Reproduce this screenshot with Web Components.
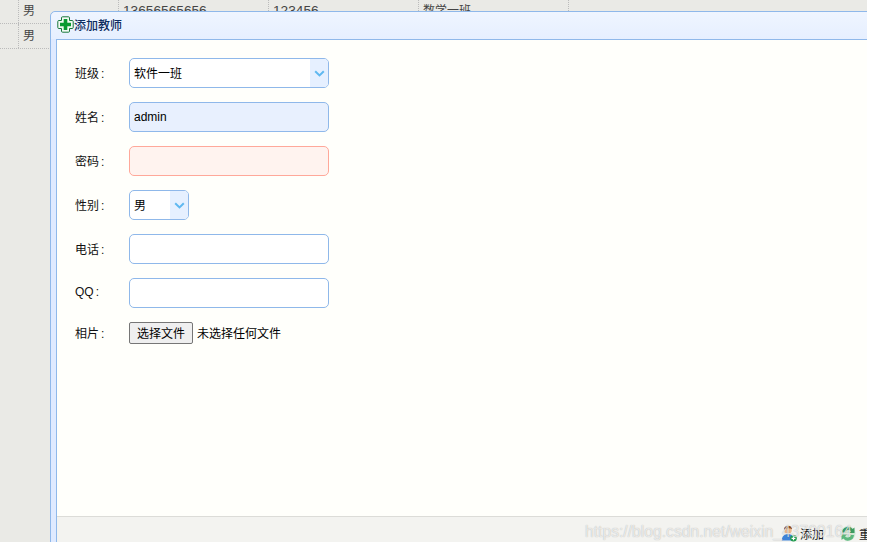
<!DOCTYPE html>
<html><head><meta charset="utf-8">
<style>
html,body{margin:0;padding:0;background:#fff;height:100%;overflow:hidden}
body{font:12px "Liberation Sans","Noto Sans CJK SC",sans-serif}
</style></head><body>
<edu-desktop>
  <edu-grid slot="grid"></edu-grid>
  <edu-dialog slot="dialog" heading="添加教师">
    <edu-field label="班级"><edu-select value="软件一班" width="200"></edu-select></edu-field>
    <edu-field label="姓名"><edu-input value="admin" state="filled"></edu-input></edu-field>
    <edu-field label="密码"><edu-input state="invalid"></edu-input></edu-field>
    <edu-field label="性别"><edu-select value="男" width="60"></edu-select></edu-field>
    <edu-field label="电话"><edu-input></edu-input></edu-field>
    <edu-field label="QQ"><edu-input></edu-input></edu-field>
    <edu-field label="相片" kind="file"><edu-file></edu-file></edu-field>
    <edu-action slot="foot" icon="add">添加</edu-action>
    <edu-action slot="foot" icon="reset">重置</edu-action>
  </edu-dialog>
  <edu-watermark slot="mark"></edu-watermark>
</edu-desktop>
<script>
const FONT='"Liberation Sans","Noto Sans CJK SC",sans-serif';
const BLUE='#8fb8ea';
class Base extends HTMLElement{
  render(html){ if(!this.shadowRoot) this.attachShadow({mode:'open'}); this.shadowRoot.innerHTML=html; }
}
customElements.define('edu-desktop',class extends Base{connectedCallback(){this.render(`<style>
:host{display:block;position:relative;width:867px;height:542px;overflow:hidden;background:#eaeae6}
</style><slot name="grid"></slot><slot name="dialog"></slot><slot name="mark"></slot>`)}});

customElements.define('edu-grid',class extends Base{connectedCallback(){
  const rows=[['男','13656565656','123456','数学一班'],['男','','','']];
  this.render(`<style>
  :host{display:block;color:#444;font:12px ${FONT};margin-top:-1px}
  .row{display:grid;grid-template-columns:18px 100px 150px 150px 150px 1fr;height:24px;border-bottom:1px dotted #bbb}
  .c{border-left:1px dotted #bbb;padding:0 4px;line-height:24px;white-space:nowrap;overflow:hidden}
  .c:first-child{border:0;padding:0}
  .n{font-size:13.7px}
  </style>`+rows.map(r=>`<div class="row"><div class="c"></div><div class="c">${r[0]}</div><div class="c n">${r[1]}</div><div class="c n">${r[2]}</div><div class="c">${r[3]}</div><div class="c"></div></div>`).join(''));
}});

customElements.define('edu-dialog',class extends Base{connectedCallback(){
  this.render(`<style>
  :host{position:absolute;left:50px;top:11px;width:860px;height:560px;box-sizing:border-box;display:flex;flex-direction:column;
    background:#dfeaff;border:1px solid ${BLUE};border-radius:5px 0 0 0;font:12px ${FONT};color:#000}
  .head{height:27px;flex:none;display:flex;align-items:center;padding:0 0 2px 6px;background:linear-gradient(#eff5ff,#e6efff);color:#0e2d5f;box-sizing:border-box;border-radius:5px 0 0 0}
  .head svg{flex:none}
  .head span{font-weight:500}
  .body{flex:1;margin-left:5px;border:1px solid ${BLUE};border-bottom:0;border-right:0;background:#fffffb;display:flex;flex-direction:column;min-height:0}
  .form{height:476px;flex:none;box-sizing:border-box;padding:18px 0 0 18px;display:flex;flex-direction:column;gap:14px}
  .foot{flex:1;background:#f3f3f0;border-top:1px solid #dcdcd8;display:flex;padding:8px 0 0 724px;gap:16px;align-items:flex-start}
  </style>
  <div class="head"><svg width="17" height="17" viewBox="0 0 17 17">
   <path d="M5.5 .8h6a1 1 0 0 1 1 1v2.700h2.700a1 1 0 0 1 1 1v6a1 1 0 0 1-1 1h-2.700v2.700a1 1 0 0 1-1 1h-6a1 1 0 0 1-1-1v-2.700H1.800a1 1 0 0 1-1-1v-6a1 1 0 0 1 1-1h2.700V1.800a1 1 0 0 1 1-1z" fill="#f2faf3" stroke="#17773a" stroke-width="1"/>
   <path d="M6.700 3h3.600v3.700H14v3.600h-3.700V14H6.700v-3.700H3V6.700h3.700z" fill="#0a9a32"/></svg><span>${this.getAttribute('heading')}</span></div>
  <div class="body"><div class="form"><slot></slot></div><div class="foot"><slot name="foot"></slot></div></div>`);
}});

customElements.define('edu-field',class extends Base{connectedCallback(){
  const file=this.getAttribute('kind')==='file';
  this.render(`<style>
  :host{display:flex;align-items:center;height:${file?'22px':'30px'};font:12px ${FONT};color:#000}
  .l{width:54px;flex:none;color:#111;padding-bottom:2px;box-sizing:border-box;white-space:nowrap}
  .c{padding-left:2px}
  </style><div class="l">${this.getAttribute('label')}<span class="c">:</span></div><slot></slot>`);
}});

customElements.define('edu-input',class extends Base{connectedCallback(){
  const s=this.getAttribute('state')||'';
  const bg=s==='filled'?'#e8f0fe':s==='invalid'?'#fff3ef':'#fff';
  const bc=s==='invalid'?'#ffa89a':BLUE;
  this.render(`<style>
  :host{display:block;width:200px;height:30px}
  input{display:block;width:100%;height:100%;box-sizing:border-box;border:1px solid ${bc};border-radius:5px;background:${bg};padding:0 4px;margin:0;font:12px ${FONT};color:#000;outline:0}
  </style><input value="${this.getAttribute('value')||''}">`);
}});

customElements.define('edu-select',class extends Base{connectedCallback(){
  const w=this.getAttribute('width');
  this.render(`<style>
  :host{display:flex;width:${w}px;height:30px;box-sizing:border-box;border:1px solid ${BLUE};border-radius:5px;background:#fff;overflow:hidden;font:12px ${FONT};color:#000}
  .t{flex:1;padding-left:4px;line-height:30px;white-space:nowrap}
  .a{width:18px;flex:none;background:#e6f0ff;display:flex;align-items:center;justify-content:center}
  </style><div class="t">${this.getAttribute('value')}</div><div class="a"><svg width="11" height="7" viewBox="0 0 11 7"><path d="M1.200 1.200 5.500 5.400 9.800 1.200" fill="none" stroke="#5fb8f0" stroke-width="2"/></svg></div>`);
}});

customElements.define('edu-file',class extends Base{connectedCallback(){
  this.render(`<style>
  :host{display:flex;align-items:center;font:12px ${FONT};color:#000}
  .b{width:64px;height:22px;box-sizing:border-box;border:1px solid #767676;border-radius:2px;background:#efefef;text-align:center;line-height:22px;color:#000}
  .t{margin-left:4px;padding-bottom:2px}
  </style><div class="b">选择文件</div><div class="t">未选择任何文件</div>`);
}});

customElements.define('edu-action',class extends Base{connectedCallback(){
  const add=`<svg width="16" height="17" viewBox="0 0 16 17"><circle cx="7" cy="5" r="3.800" fill="#eeb98f"/><path d="M3 4.800C3 1.800 5 .8 7 .8s4 1 4 3.400C9 3 6 3 3 4.800z" fill="#8a4a22"/><path d="M.8 15.500c0-4.300 2.600-6.500 6.200-6.500s6 2.200 6 6.500z" fill="#3f84d8"/><circle cx="12.500" cy="13.300" r="3.300" fill="#1f9a4c"/><path d="M12.500 11.400v3.800M10.600 13.300h3.800" stroke="#fff" stroke-width="1.200"/></svg>`;
  const rst=`<svg width="16" height="17" viewBox="0 0 16 17"><circle cx="8" cy="8.500" r="7.500" fill="#cfe8d6"/><path d="M2 7.500A6 6 0 0 1 12.600 4L14.500 2.500V8H9l2-1.800A3.500 3.500 0 0 0 5 7.500z" fill="#3d9c62"/><path d="M14 10A6 6 0 0 1 3.400 13.500L1.500 15V9.500H7L5 11.300a3.500 3.500 0 0 0 6-1.300z" fill="#5cb87e"/></svg>`;
  this.render(`<style>
  :host{display:flex;align-items:center;gap:3px;font:12px ${FONT};color:#1a1a1a;height:17px;white-space:nowrap}
  </style>${this.getAttribute('icon')==='add'?add:rst}<slot></slot>`);
}});

customElements.define('edu-watermark',class extends Base{connectedCallback(){
  this.render(`<style>:host{position:absolute;left:585px;top:522px;font:15.7px "Liberation Sans",sans-serif;color:rgba(255,255,255,.7);text-shadow:0 0 1px rgba(0,0,0,.3);white-space:nowrap;pointer-events:none;line-height:20px}</style>https://blog.csdn.net/weixin_43709164`);
}});
</script>
</body></html>
